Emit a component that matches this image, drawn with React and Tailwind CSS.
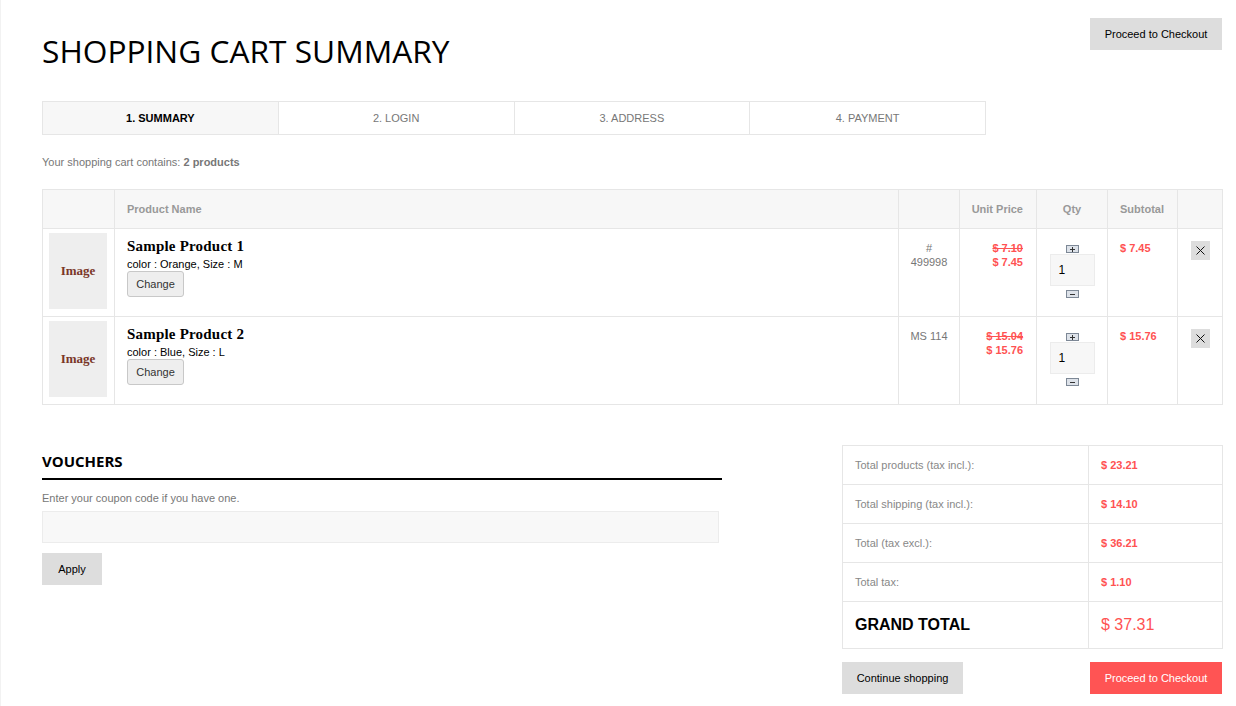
const steps = ["1. Summary", "2. Login", "3. Address", "4. Payment"];

const products = [
  {
    name: "Sample Product 1",
    attrs: "color : Orange, Size : M",
    ref: ["#", "499998"],
    oldPrice: "$ 7.10",
    price: "$ 7.45",
    subtotal: "$ 7.45",
  },
  {
    name: "Sample Product 2",
    attrs: "color : Blue, Size : L",
    ref: ["MS 114"],
    oldPrice: "$ 15.04",
    price: "$ 15.76",
    subtotal: "$ 15.76",
  },
];

const totals = [
  { label: "Total products (tax incl.):", value: "$ 23.21" },
  { label: "Total shipping (tax incl.):", value: "$ 14.10" },
  { label: "Total (tax excl.):", value: "$ 36.21" },
  { label: "Total tax:", value: "$ 1.10" },
];

function QtyButton({ minus }) {
  return (
    <button className="flex h-[8px] w-[13px] items-center justify-center border border-[#7d8896] bg-[#dde2e9]">
      <svg width="7" height="5" viewBox="0 0 7 5">
        <line x1="1" y1="2.5" x2="6" y2="2.5" stroke="#333" strokeWidth="1" />
        {!minus && <line x1="3.5" y1="0" x2="3.5" y2="5" stroke="#333" strokeWidth="1" />}
      </svg>
    </button>
  );
}

export default function App() {
  return (
    <div className="min-h-[706px] w-full border-l border-[#f2f2f2] bg-white font-['Liberation_Sans',Arial,sans-serif] text-[11px] text-[#777]">
      <div className="w-[1180px] pl-[41px] box-content">
        {/* Header */}
        <div className="flex items-start justify-between pt-[18px]">
          <h1 className="mt-[17px] font-['Open_Sans',sans-serif] text-[31.7px] leading-[32px] font-normal text-black">
            SHOPPING CART SUMMARY
          </h1>
          <button className="h-[32px] w-[132px] bg-[#dddddd] text-[11px] text-black">
            Proceed to Checkout
          </button>
        </div>

        {/* Steps */}
        <div className="mt-[34px] flex h-[34px] w-[944px] border border-[#e6e6e6]">
          {steps.map((s, i) => (
            <div
              key={s}
              className={
                i === 0
                  ? "flex flex-1 items-center justify-center bg-[#f7f7f7] pt-[1px] font-bold uppercase text-black"
                  : "flex flex-1 items-center justify-center border-l border-[#e6e6e6] pt-[1px] uppercase text-[#777]"
              }
            >
              {s}
            </div>
          ))}
        </div>

        <p className="mt-[20px] leading-[14px]">
          Your shopping cart contains: <span className="font-bold">2 products</span>
        </p>

        {/* Cart table */}
        <table className="mt-[20px] w-[1180px] table-fixed border-collapse border border-[#e6e6e6]">
          <colgroup>
            <col className="w-[72px]" />
            <col className="w-[784px]" />
            <col className="w-[61px]" />
            <col className="w-[77px]" />
            <col className="w-[71px]" />
            <col className="w-[70px]" />
            <col className="w-[45px]" />
          </colgroup>
          <thead>
            <tr className="h-[39px] bg-[#f7f7f7] font-bold text-[#999]">
              <th className="border border-[#e6e6e6]"></th>
              <th className="border border-[#e6e6e6] pl-[12px] text-left">Product Name</th>
              <th className="border border-[#e6e6e6]"></th>
              <th className="border border-[#e6e6e6] pr-[13px] text-right">Unit Price</th>
              <th className="border border-[#e6e6e6] text-center">Qty</th>
              <th className="border border-[#e6e6e6] pl-[12px] text-left">Subtotal</th>
              <th className="border border-[#e6e6e6]"></th>
            </tr>
          </thead>
          <tbody>
            {products.map((p) => (
              <tr key={p.name} className="h-[88px] align-top">
                <td className="border border-[#e6e6e6] pl-[6px] pt-[4px]">
                  <div className="flex h-[76px] w-[58px] items-center justify-center bg-[#eeeeee] font-['Liberation_Serif',serif] text-[13px] font-bold text-[#7a3628]">
                    Image
                  </div>
                </td>
                <td className="border border-[#e6e6e6] pl-[12px] pt-[8px]">
                  <div className="font-['Liberation_Serif',serif] text-[15px] leading-[18px] font-bold tracking-[0.2px] text-black">
                    {p.name}
                  </div>
                  <div className="mt-[2px] leading-[14px] text-black">{p.attrs}</div>
                  <button className="h-[26px] w-[57px] rounded-[3px] border border-[#c8c8c8] bg-[#eeeeee] text-[11px] text-[#333]">
                    Change
                  </button>
                </td>
                <td className="border border-[#e6e6e6] pt-[12px] text-center leading-[14px]">
                  {p.ref.map((r) => (
                    <div key={r}>{r}</div>
                  ))}
                </td>
                <td className="border border-[#e6e6e6] pr-[13px] pt-[12px] text-right font-bold leading-[14px] text-[#ff5252]">
                  <div className="line-through">{p.oldPrice}</div>
                  <div>{p.price}</div>
                </td>
                <td className="border border-[#e6e6e6] pt-[16px]">
                  <div className="flex flex-col items-center">
                    <QtyButton />
                    <div className="mt-[1px] flex h-[32px] w-[45px] items-center border border-[#ececec] bg-[#f7f7f7] pl-[8px] text-[12px] text-black">
                      1
                    </div>
                    <div className="mt-[4px]">
                      <QtyButton minus />
                    </div>
                  </div>
                </td>
                <td className="border border-[#e6e6e6] pl-[12px] pt-[12px] font-bold leading-[14px] text-[#ff5252]">
                  {p.subtotal}
                </td>
                <td className="border border-[#e6e6e6] pt-[12px]">
                  <div className="flex justify-center">
                    <button className="flex h-[19px] w-[19px] items-center justify-center bg-[#dddddd]">
                      <svg width="9" height="9" viewBox="0 0 9 9">
                        <path d="M0.5 0.5 L8.5 8.5 M8.5 0.5 L0.5 8.5" stroke="#111" strokeWidth="1" />
                      </svg>
                    </button>
                  </div>
                </td>
              </tr>
            ))}
          </tbody>
        </table>

        {/* Bottom: vouchers and totals */}
        <div className="mt-[40px] flex items-start justify-between">
          <div className="w-[680px] pt-[6px]">
            <h3 className="border-b-2 border-black pb-[7px] font-['Open_Sans',sans-serif] text-[15px] leading-[20px] font-bold text-black">
              VOUCHERS
            </h3>
            <p className="mt-[11px] leading-[14px]">Enter your coupon code if you have one.</p>
            <div className="mt-[6px] h-[32px] w-[677px] border border-[#ececec] bg-[#f8f8f8]"></div>
            <button className="mt-[10px] h-[32px] w-[60px] bg-[#dddddd] text-[11px] text-black">
              Apply
            </button>
          </div>

          <div className="w-[380px]">
            <table className="w-[380px] table-fixed border-collapse border border-[#e6e6e6]">
              <colgroup>
                <col className="w-[246px]" />
                <col className="w-[134px]" />
              </colgroup>
              <tbody>
                {totals.map((t) => (
                  <tr key={t.label} className="h-[39px]">
                    <td className="border border-[#e6e6e6] pl-[12px] text-[#888]">{t.label}</td>
                    <td className="border border-[#e6e6e6] pl-[12px] font-bold text-[#ff5252]">{t.value}</td>
                  </tr>
                ))}
                <tr className="h-[47px]">
                  <td className="border border-[#e6e6e6] pl-[12px] text-[16px] font-bold text-black">
                    GRAND TOTAL
                  </td>
                  <td className="border border-[#e6e6e6] pl-[12px] text-[16px] text-[#ff5252]">$ 37.31</td>
                </tr>
              </tbody>
            </table>
            <div className="mt-[13px] flex justify-between">
              <button className="h-[32px] w-[121px] bg-[#dddddd] text-[11px] text-black">
                Continue shopping
              </button>
              <button className="h-[32px] w-[132px] bg-[#ff5454] text-[11px] text-white">
                Proceed to Checkout
              </button>
            </div>
          </div>
        </div>
      </div>
    </div>
  );
}
